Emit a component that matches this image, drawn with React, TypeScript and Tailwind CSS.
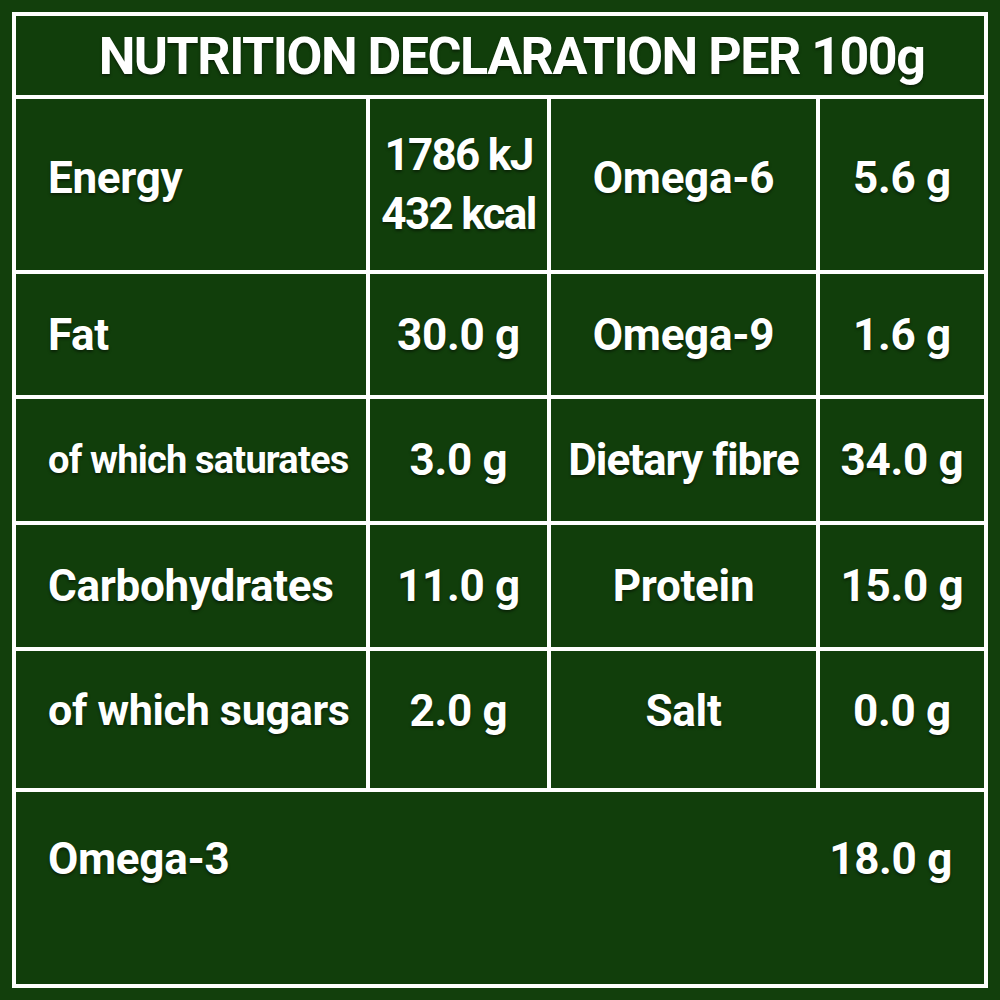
import React from "react";

type Row = {
  label: string;
  value: React.ReactNode;
  label2: string;
  value2: string;
  h: string;
  pad?: string;
  labelCls?: string;
  label2Cls?: string;
};

const rows: Row[] = [
  {
    label: "Energy",
    value: (
      <div className="flex flex-col items-center leading-[59px] tracking-[-1.7px]">
        <span>1786 kJ</span>
        <span>432 kcal</span>
      </div>
    ),
    label2: "Omega-6",
    value2: "5.6 g",
    h: "h-[171px]",
    pad: "pb-[14px]",
  },
  { label: "Fat", value: "30.0 g", label2: "Omega-9", value2: "1.6 g", h: "h-[121px]" },
  {
    label: "of which saturates",
    value: "3.0 g",
    label2: "Dietary fibre",
    value2: "34.0 g",
    h: "h-[122px]",
    labelCls: "text-[38px] tracking-[-0.8px]",
    label2Cls: "tracking-[-1px]",
  },
  { label: "Carbohydrates", value: "11.0 g", label2: "Protein", value2: "15.0 g", h: "h-[122px]" },
  {
    label: "of which sugars",
    value: "2.0 g",
    label2: "Salt",
    value2: "0.0 g",
    h: "h-[137px]",
    pad: "pb-[18px]",
    labelCls: "text-[43px]",
  },
];

const cell = "bg-[#113e0b] flex items-center";

export default function App() {
  return (
    <div
      className="w-[1000px] h-[1000px] bg-[#123f0c] p-[12px] text-white font-bold [text-shadow:0_2px_3px_rgba(0,0,0,0.45)]"
      style={{ fontFamily: "Roboto, 'Liberation Sans', sans-serif" }}
    >
      <div className="w-[976px] h-[976px] border-4 border-white bg-white flex flex-col gap-[4px]">
        {/* title */}
        <div className={`${cell} justify-center h-[79px] text-[52px] tracking-[-1.5px] pt-[2px] pl-[23px]`}>
          NUTRITION DECLARATION PER 100g
        </div>

        {rows.map((r, i) => (
          <div
            key={r.label}
            className={`grid grid-cols-[350px_177px_265px_164px] gap-[4px] ${r.h} text-[44px] tracking-[-0.3px]`}
          >
            <div className={`${cell} pl-[32px] ${r.pad ?? ""} ${r.labelCls ?? ""}`}>{r.label}</div>
            <div className={`${cell} justify-center ${i === 0 ? "" : r.pad ?? ""}`}>{r.value}</div>
            <div className={`${cell} justify-center ${r.pad ?? ""} ${r.label2Cls ?? ""}`}>{r.label2}</div>
            <div className={`${cell} justify-center ${r.pad ?? ""}`}>{r.value2}</div>
          </div>
        ))}

        {/* omega-3 */}
        <div className={`${cell} justify-between flex-1 px-[32px] pb-[58px] text-[44px] tracking-[-0.3px]`}>
          <span>Omega-3</span>
          <span>18.0 g</span>
        </div>
      </div>
    </div>
  );
}
